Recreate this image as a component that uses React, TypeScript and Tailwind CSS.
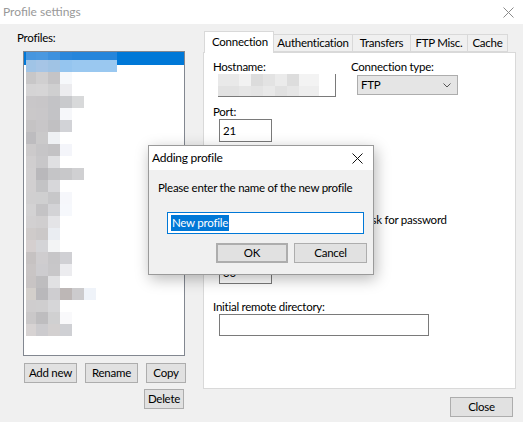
const blockW = ["w-[10px]", "w-[12px]", "w-[12px]", "w-[12px]", "w-[12px]", "w-[12px]", "w-[12px]", "w-[9px]"];

// blurred profile names (mosaic), one array per list row
const profileRows: string[][] = [
  ["bg-[#4796df]", "bg-[#4a98e0]", "bg-[#3e91de]", "bg-[#2a87dc]", "bg-[#2585db]", "bg-[#2585db]", "bg-[#2585db]", "bg-[#2585db]"],
  ["bg-[#a0c4e6]", "bg-[#a6c5e6]", "bg-[#a0c3e4]", "bg-[#95c5ef]", "bg-[#9ac8f0]", "bg-[#9ac8f0]", "bg-[#9ac8f0]", "bg-[#9ac8f0]"],
  ["bg-[#c8c7c8]", "bg-[#d0cfd0]", "bg-[#c5c4c6]", "bg-[#f6f8fb]"],
  ["bg-[#d5d4d5]", "bg-[#d6d5d6]", "bg-[#cfcfd0]", "bg-[#ececef]"],
  ["bg-[#c9c7c9]", "bg-[#c8c6c8]", "bg-[#c3c3c6]", "bg-[#c9cacd]", "bg-[#d8d9da]"],
  ["bg-[#cac8c9]", "bg-[#c9c7c9]", "bg-[#c3c3c6]", "bg-[#f6f7fa]"],
  ["bg-[#c5c3c4]", "bg-[#c8c6c8]", "bg-[#c1c0c2]", "bg-[#d2d3d7]"],
  ["bg-[#bdbcbf]", "bg-[#cac9ca]", "bg-[#eff1f4]"],
  ["bg-[#cccacb]", "bg-[#c6c5c7]", "bg-[#c3c2c4]", "bg-[#f4f5fa]"],
  ["bg-[#d0cecf]", "bg-[#c8c7c9]", "bg-[#e0e0e2]"],
  ["bg-[#d1cfd0]", "bg-[#b9b8bb]", "bg-[#c5c5c7]", "bg-[#c8c8ca]", "bg-[#d0d0d2]"],
  ["bg-[#d1cfd0]", "bg-[#c3c3c5]", "bg-[#d7d7da]"],
  ["bg-[#d0cfd0]", "bg-[#cfcfd0]", "bg-[#c7c7c9]", "bg-[#f6f7fb]"],
  ["bg-[#d3d2d3]", "bg-[#c4c3c5]", "bg-[#d3d3d6]", "bg-[#f6f8fc]"],
  ["bg-[#d2d0d1]", "bg-[#d0cecf]", "bg-[#e4e4e7]"],
  ["bg-[#cfcbca]", "bg-[#cbc8c8]", "bg-[#eaedf2]"],
  ["bg-[#d5cfcf]", "bg-[#d4d4d7]", "bg-[#f3f4f5]"],
  ["bg-[#c6c2c2]", "bg-[#cfcdcf]", "bg-[#c7c6c8]", "bg-[#d0d0d4]"],
  ["bg-[#c9c5c5]", "bg-[#cdcccf]", "bg-[#c8c7c9]", "bg-[#ececef]"],
  ["bg-[#c8c4c4]", "bg-[#bebdbf]", "bg-[#e1e1e3]"],
  ["bg-[#d3cfcb]", "bg-[#b9b8bb]", "bg-[#cecdd0]", "bg-[#bdb7b6]", "bg-[#cccbcd]", "bg-[#eff3f9]"],
  ["bg-[#cfcdce]", "bg-[#cfcecf]", "bg-[#d6d6d8]"],
  ["bg-[#cac8c9]", "bg-[#bebdbf]", "bg-[#d0d0d1]", "bg-[#f9f9fb]"],
  ["bg-[#d7d3d3]", "bg-[#cccbce]", "bg-[#d3d0d0]", "bg-[#cfd0d4]"],
];

const hostW = ["w-[21px]", "w-[12px]", "w-[12px]", "w-[12px]", "w-[12px]", "w-[12px]", "w-[20px]"];
const hostRows: string[][] = [
  ["bg-[#e9e9e9]", "bg-[#f2f2f2]", "bg-[#dcdcdc]", "bg-[#e3e3e3]", "bg-[#ebebeb]", "bg-[#dddddd]", "bg-[#f3f3f3]"],
  ["bg-[#e2e2e2]", "bg-[#e6e6e6]", "bg-[#e4e4e4]", "bg-[#e9e9e9]", "bg-[#e1e1e1]", "bg-[#e6e6e6]", "bg-[#eeeeee]"],
];

const tabs = [
  { label: "Authentication", w: "w-[80px]" },
  { label: "Transfers", w: "w-[59px]" },
  { label: "FTP Misc.", w: "w-[58px]" },
  { label: "Cache", w: "w-[41px]" },
];

const Btn = ({ label, className }: { label: string; className: string }) => (
  <div className={`flex items-center justify-center border border-[#adadad] bg-[#e1e1e1] h-[20px] ${className}`}>
    {label}
  </div>
);

const CloseX = ({ color }: { color: string }) => (
  <svg width="11" height="11" viewBox="0 0 11 11">
    <path d="M0.5 0.5 L10.5 10.5 M10.5 0.5 L0.5 10.5" stroke={color} strokeWidth="1" />
  </svg>
);

export default function App() {
  return (
    <div className="relative w-[523px] h-[422px] overflow-hidden bg-[#f0f0f0] text-[11.5px] leading-[16px] tracking-[-0.25px] text-black font-['Lato',sans-serif]">
      {/* title bar */}
      <div className="flex h-[24px] items-center justify-between bg-white pl-[3px] pr-[9px]">
        <span className="text-[12px] tracking-normal text-[#999999]">Profile settings</span>
        <CloseX color="#8a8a8a" />
      </div>

      <div className="flex">
        {/* left: profiles */}
        <div className="w-[203px] pl-[17px] pt-[6px]">
          <div>Profiles:</div>
          <div className="relative ml-[6px] mt-[5px] h-[305px] w-[162px] border border-[#828790] bg-white">
            <div className="absolute left-0 right-0 top-0 h-[13px] bg-[#0078d7]" />
            <div className="relative pl-[2px]">
              {profileRows.map((row, r) => (
                <div key={r} className={`flex ${r === 0 ? "h-[8px]" : "h-[12px]"}`}>
                  {row.map((c, i) => (
                    <div key={i} className={`${blockW[i]} h-full ${c}`} />
                  ))}
                </div>
              ))}
            </div>
          </div>
          <div className="ml-[7px] mt-[7px] flex gap-[8px]">
            <Btn label="Add new" className="w-[53px]" />
            <Btn label="Rename" className="w-[53px]" />
            <Btn label="Copy" className="w-[40px]" />
          </div>
          <div className="ml-[127px] mt-[6px] flex">
            <Btn label="Delete" className="w-[40px]" />
          </div>
        </div>

        {/* right: tabs */}
        <div className="pt-[7px]">
          <div className="flex h-[21px] items-end pl-[1px]">
            <div className="relative z-10 -mb-px flex h-[22px] w-[70px] items-start border border-b-0 border-[#d9d9d9] bg-white pl-[7px] pt-[2px]">
              Connection
            </div>
            {tabs.map((t) => (
              <div
                key={t.label}
                className={`-ml-px flex h-[18px] items-center justify-center border border-[#d9d9d9] bg-[#f0f0f0] ${t.w}`}
              >
                {t.label}
              </div>
            ))}
          </div>
          <div className="relative h-[337px] w-[313px] border border-[#d9d9d9] bg-white pl-[9px] pt-[7px]">
            <div className="flex">
              <div className="w-[138px]">
                <div className="leading-[14px]">Hostname:</div>
                <div className="relative ml-[5px] h-[23px] w-[118px] border-b border-r border-[#7a7a7a]">
                  <div className="absolute left-0 top-0">
                    {hostRows.map((row, r) => (
                      <div key={r} className={`flex ${r === 0 ? "h-[12px]" : "h-[10px]"}`}>
                        {row.map((c, i) => (
                          <div key={i} className={`${hostW[i]} h-full ${c}`} />
                        ))}
                      </div>
                    ))}
                  </div>
                </div>
              </div>
              <div>
                <div className="leading-[14px]">Connection type:</div>
                <div className="ml-[6px] mt-[1px] flex h-[20px] w-[101px] items-center justify-between border border-[#adadad] bg-[#e5e5e5] pl-[3px] pr-[6px]">
                  <span>FTP</span>
                  <svg width="8" height="5" viewBox="0 0 8 5">
                    <path d="M0.5 0.5 L4 4 L7.5 0.5" fill="none" stroke="#555" strokeWidth="1" />
                  </svg>
                </div>
              </div>
            </div>

            <div className="mt-[8px] leading-[14px]">Port:</div>
            <div className="ml-[6px] flex h-[23px] w-[53px] items-center border border-[#7a7a7a] pl-[3px]">21</div>

            {/* username / password rows, under the modal */}
            <div className="mt-[21px] ml-[6px] h-[23px] w-[117px] border border-[#7a7a7a]" />

            <div className="mt-[7px] flex">
              <div className="w-[120px] pt-[14px]">
                <div className="ml-[6px] h-[23px] w-[100px] border border-[#7a7a7a]" />
              </div>
              <div className="mt-[16px] flex items-center gap-[5px] pl-[13px]">
                <div className="h-[13px] w-[13px] border border-[#333] bg-white" />
                <span>Ask for password</span>
              </div>
            </div>

            <div className="ml-[6px] mt-[31px] flex h-[23px] w-[53px] items-center border border-[#7a7a7a] pl-[3px]">30</div>

            <div className="mt-[16px] leading-[14px]">Initial remote directory:</div>
            <div className="ml-[6px] h-[22px] w-[210px] border border-[#7a7a7a]" />
          </div>
          <div className="mt-[8px] flex justify-end pr-[3px]">
            <Btn label="Close" className="w-[63px]" />
          </div>
        </div>
      </div>

      {/* modal dialog */}
      <div className="absolute left-[148px] top-[145px] h-[130px] w-[226px] border border-[#9a9a9a] bg-[#f0f0f0] shadow-[2px_4px_14px_rgba(0,0,0,0.28)]">
        <div className="flex h-[24px] items-center justify-between bg-white pl-[3px] pr-[10px]">
          <span className="text-[12px]">Adding profile</span>
          <CloseX color="#111" />
        </div>
        <div className="pl-[9px] pt-[10px]">Please enter the name of the new profile</div>
        <div className="ml-[18px] mt-[16px] flex h-[22px] w-[197px] items-center border border-[#0078d7] bg-white pl-[3px]">
          <span className="bg-[#0078d7] px-px text-white">New profile</span>
        </div>
        <div className="ml-[67px] mt-[9px] flex gap-[6px]">
          <Btn label="OK" className="w-[72px] border-2 border-[#0078d7]" />
          <Btn label="Cancel" className="w-[73px]" />
        </div>
      </div>
    </div>
  );
}
